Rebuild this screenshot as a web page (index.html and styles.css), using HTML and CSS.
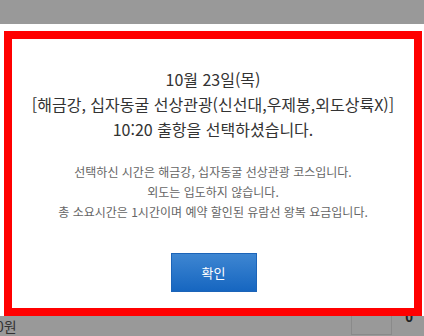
FILE: index.html
```html
<!DOCTYPE html>
<html lang="ko">
<head>
<meta charset="utf-8">
<title>출항 선택</title>
<link rel="stylesheet" href="styles.css">
</head>
<body>
<div class="topbar"></div>
<div class="modal-wrap">
  <div class="modal">
    <div class="title">
      <p>10월 23일(목)</p>
      <p>[해금강, 십자동굴 선상관광(신선대,우제봉,외도상륙X)]</p>
      <p>10:20 출항을 선택하셨습니다.</p>
    </div>
    <div class="desc">
      <p>선택하신 시간은 해금강, 십자동굴 선상관광 코스입니다.</p>
      <p>외도는 입도하지 않습니다.</p>
      <p>총 소요시간은 1시간이며 예약 할인된 유람선 왕복 요금입니다.</p>
    </div>
    <div class="actions">
      <button class="btn" type="button">확인</button>
    </div>
  </div>
</div>
<div class="bottom">
  <span class="price">0원</span>
  <span class="spacer"></span>
  <span class="qty"></span>
  <span class="count">0</span>
</div>
</body>
</html>
```

FILE: styles.css
```css
html, body {
  margin: 0;
  padding: 0;
}
body {
  width: 424px;
  height: 336px;
  overflow: hidden;
  background: #999999;
  font-family: "Noto Sans CJK KR", "Noto Sans", sans-serif;
}
p {
  margin: 0;
}
.topbar {
  height: 24px;
  background: #999999;
}
.modal-wrap {
  position: relative;
  z-index: 1;
  background: #ffffff;
  padding: 7px 2px 0 4px;
}
.modal {
  box-sizing: border-box;
  height: 285px;
  border: 8px solid #ff0000;
  background: #ffffff;
  padding-top: 28px;
  text-align: center;
}
.title {
  font-size: 16px;
  line-height: 25px;
  color: #333333;
}
.desc {
  margin-top: 20px;
  font-size: 12px;
  line-height: 20px;
  color: #666666;
}
.actions {
  margin-top: 31px;
  display: flex;
  justify-content: center;
}
.btn {
  box-sizing: border-box;
  width: 86px;
  height: 39px;
  margin-left: 1px;
  border: 1px solid #1c64b8;
  background: linear-gradient(#3e86d2, #1666c0);
  color: #ffffff;
  font-family: "Noto Sans CJK KR", sans-serif;
  font-size: 13px;
  padding: 0;
}
.bottom {
  display: flex;
  align-items: flex-start;
  height: 26px;
  margin-top: -6px;
  background: #999999;
}
.price {
  align-self: flex-end;
  margin-left: -4px;
  margin-bottom: 2px;
  font-size: 14px;
  line-height: 16px;
  color: #333333;
}
.spacer {
  flex: 1;
}
.qty {
  box-sizing: border-box;
  width: 41px;
  height: 25px;
  border: 1px solid #8a8a8a;
}
.count {
  margin-left: 13px;
  margin-right: 11px;
  font-size: 14px;
  line-height: 14px;
  font-weight: bold;
  color: #222222;
  font-family: "Liberation Sans", sans-serif;
}
```
